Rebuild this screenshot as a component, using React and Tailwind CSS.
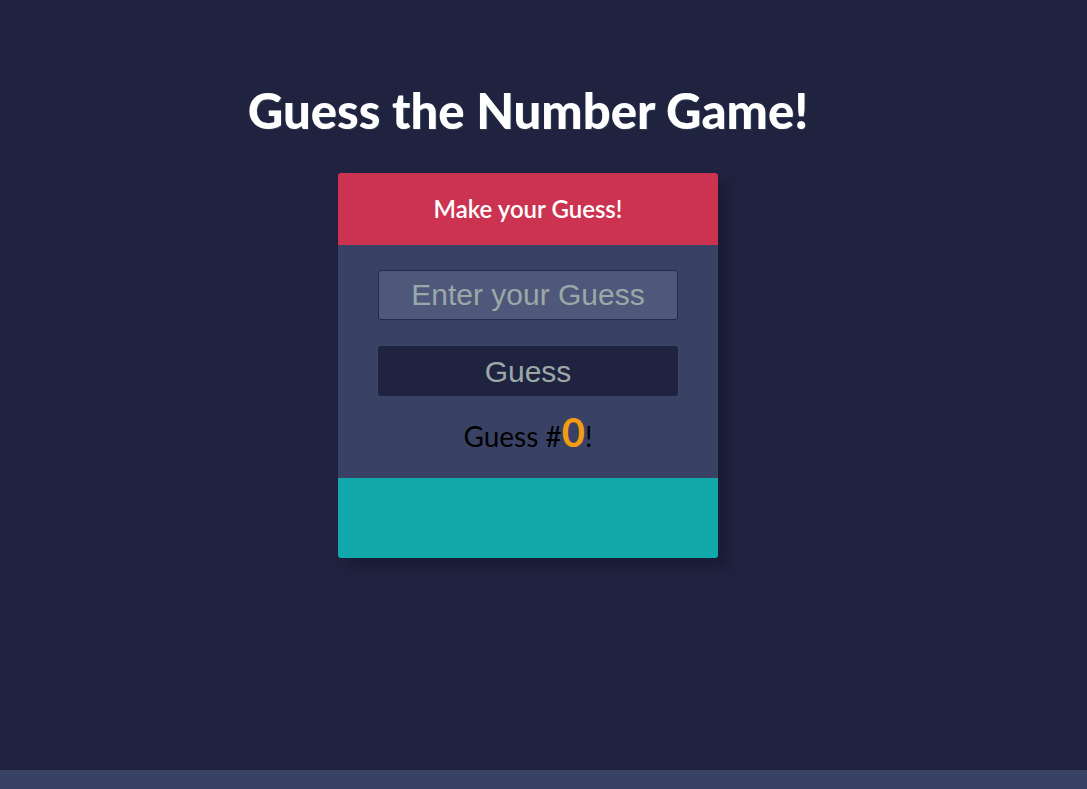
export default function App() {
  return (
    <div className="min-h-screen w-full bg-[#1f2340] flex flex-col font-['Lato',sans-serif]">
      <div className="flex-1 w-[1056px] flex flex-col items-center">
        <h1 className="mt-[77px] text-[49px] leading-[66px] font-black text-white [text-shadow:1px_1px_0_#2c3e50]">
          Guess the Number Game!
        </h1>
        <div className="mt-[30px] w-[380px] rounded-[3px] overflow-hidden shadow-[10px_10px_12px_rgba(0,0,0,0.2)]">
          <div className="h-[72px] bg-[#cc3350] flex items-center justify-center text-white text-[24px] font-semibold">
            Make your Guess!
          </div>
          <div className="bg-[#394265] h-[233px] flex flex-col items-center pt-[25px]">
            <input
              placeholder="Enter your Guess"
              className="w-[300px] h-[50px] rounded-[3px] bg-[#4f577a] border border-[#262b45] text-center text-[30px] font-['Liberation_Sans',Arial,sans-serif] text-[#9aa9a8] placeholder:text-[#9aa9a8] outline-none"
            />
            <button className="mt-[26px] w-[300px] h-[50px] rounded-[3px] bg-[#1f2340] text-[30px] font-['Liberation_Sans',Arial,sans-serif] text-[#9aa9a8]">
              Guess
            </button>
            <p className="mt-[16px] text-[28px] text-black leading-[40px]">
              Guess #<span className="text-[40px] font-bold text-[#f39c12]">0</span>!
            </p>
          </div>
          <div className="h-[80px] bg-[#10a8ab]" />
        </div>
      </div>
      <div className="h-[19px] bg-[#394265]" />
    </div>
  );
}
